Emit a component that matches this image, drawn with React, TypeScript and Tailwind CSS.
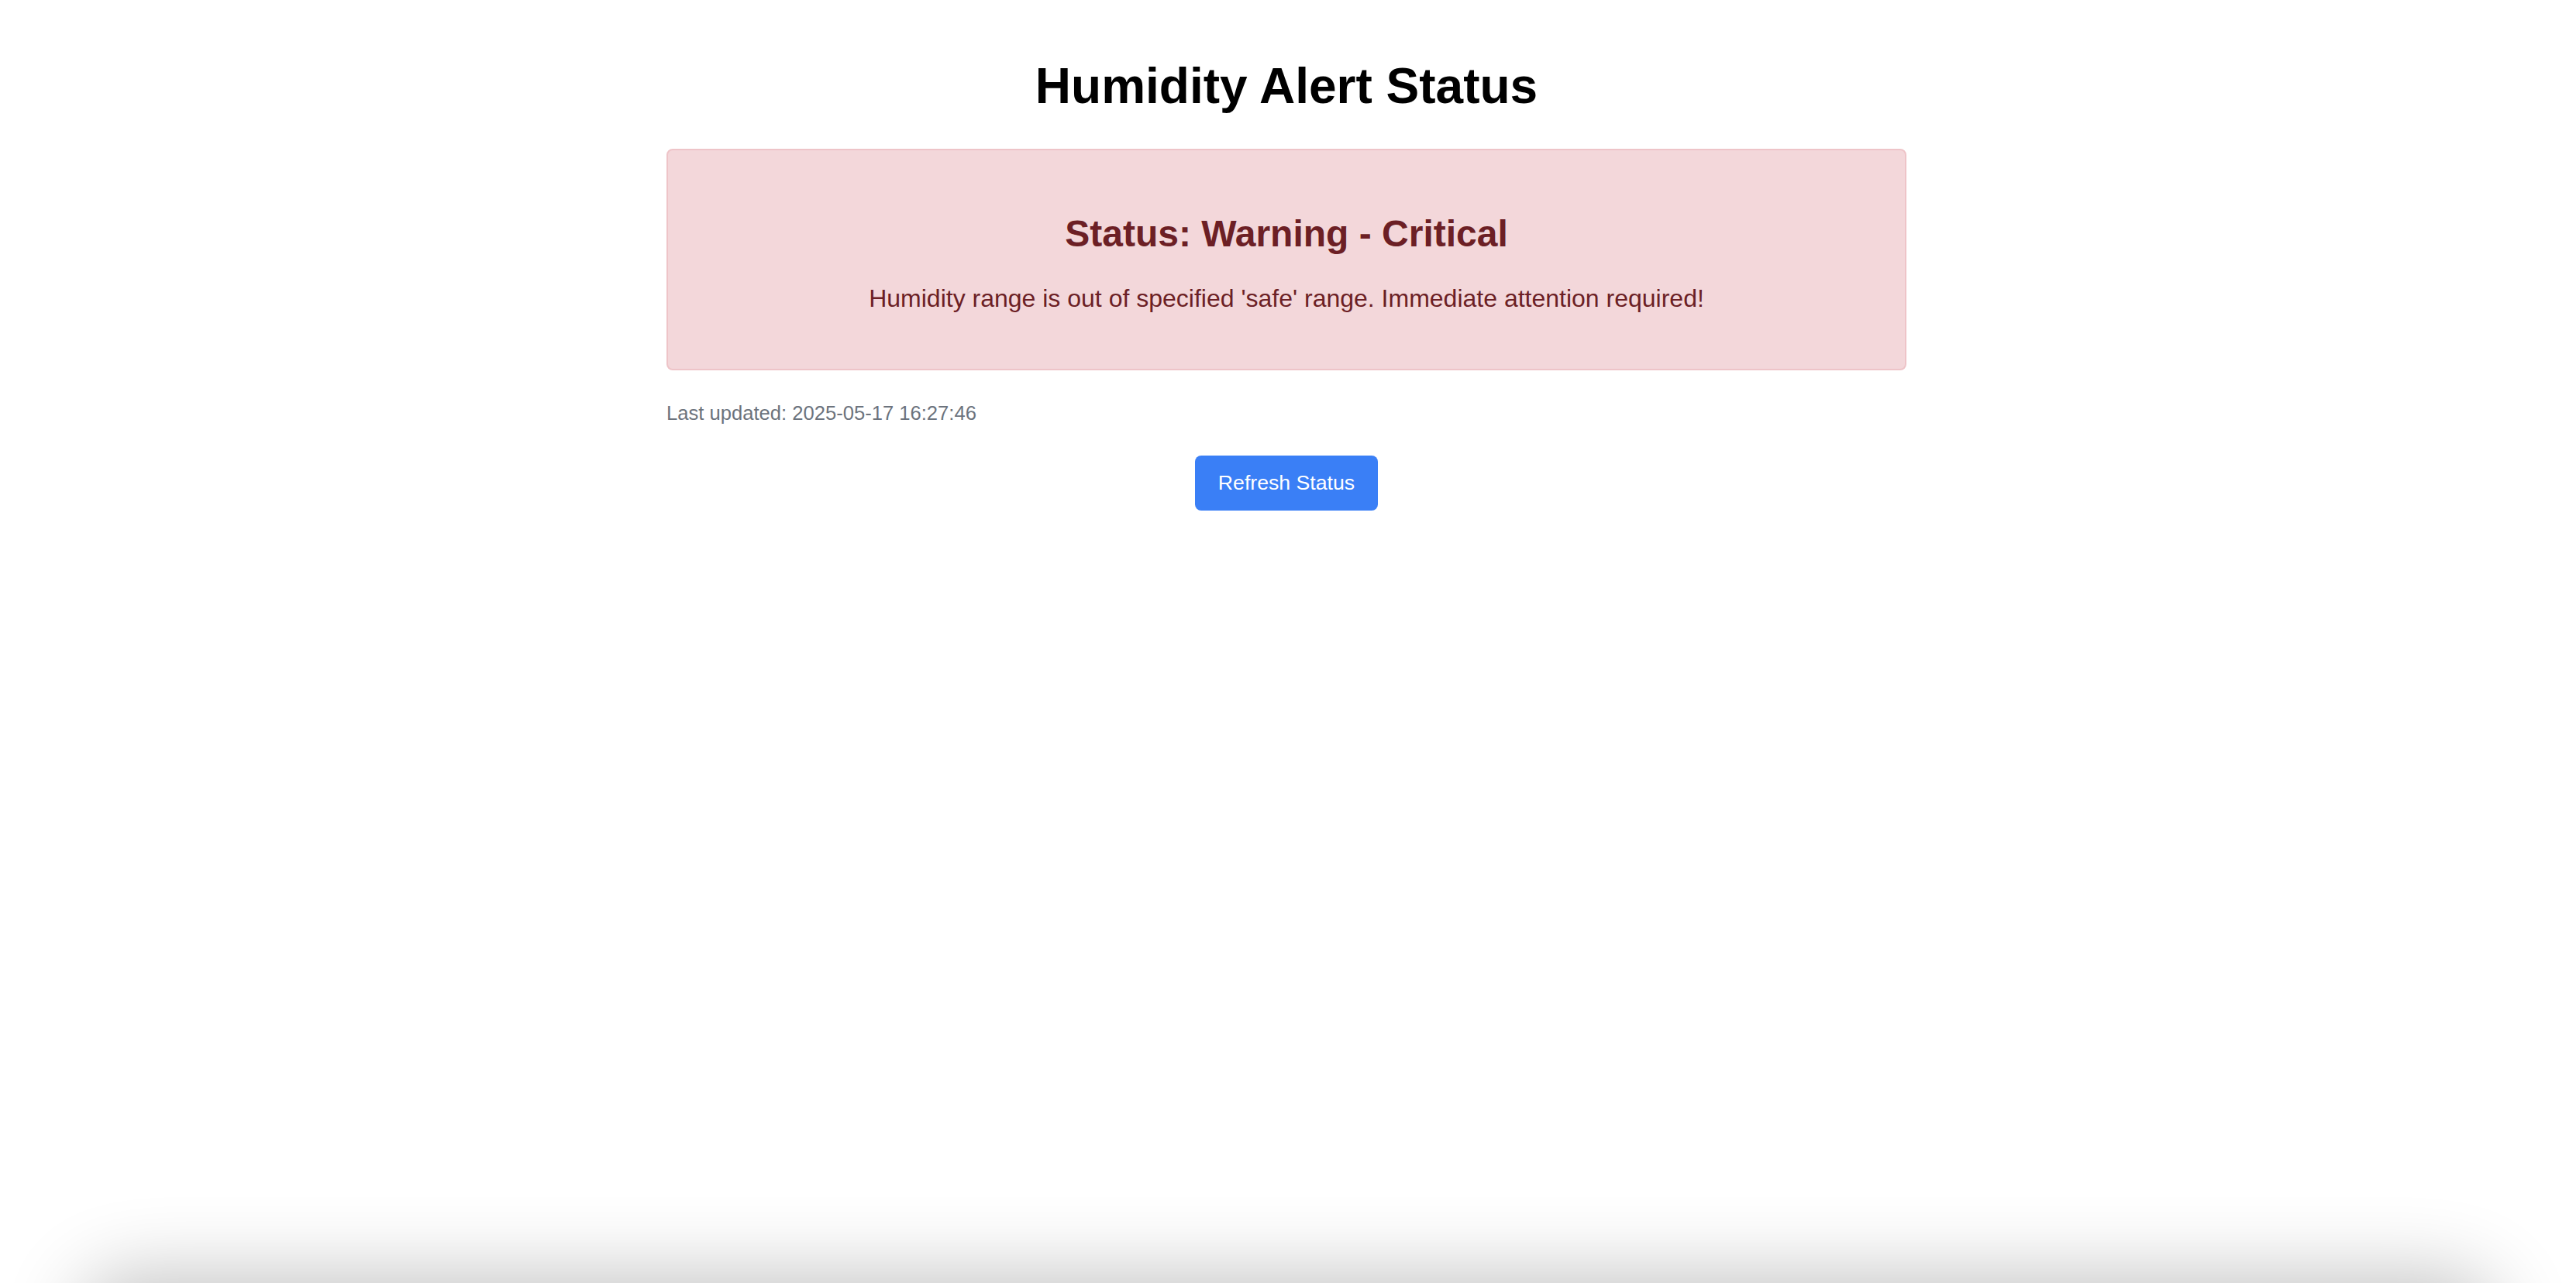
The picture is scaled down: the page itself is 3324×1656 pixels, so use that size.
import React from "react";

const status = {
    title: "Status: Warning - Critical",
    message: "Humidity range is out of specified 'safe' range. Immediate attention required!",
    updated: "2025-05-17 16:27:46",
};

export default function App() {
    return (
        <div className="min-h-screen bg-white font-['Liberation_Sans',Arial,sans-serif] text-black">
            <div className="flex justify-center pr-[4px]">
                <div className="w-[1600px] pt-[74px]">
                    <h1 className="text-center text-[64px] font-bold leading-[74px]">
                        Humidity Alert Status
                    </h1>

                    <div className="mt-[44px] rounded-[8px] border-2 border-[#eec4c8] bg-[#f3d7da] px-[40px] py-[40px] text-center text-[#6c1f25]">
                        <h2 className="mt-[40px] text-[48px] font-bold leading-[55px]">
                            {status.title}
                        </h2>
                        <p className="mt-[38px] mb-[32px] text-[32px] leading-[37px]">
                            {status.message}
                        </p>
                    </div>

                    <p className="mt-[41px] text-[25.6px] leading-[29.4px] text-[#6c737d]">
                        Last updated: {status.updated}
                    </p>

                    <div className="mt-[40px] flex justify-center">
                        <button className="rounded-[8px] bg-[#3a7ff6] px-[30px] py-[20px] text-[26.67px] leading-[30.67px] text-white">
                            Refresh Status
                        </button>
                    </div>
                </div>
            </div>

            {/* window shadow along the bottom edge */}
            <div className="pointer-events-none fixed left-[120px] right-[120px] top-[1665px] h-[100px] rounded-[60px] shadow-[0_0_100px_20px_rgba(0,0,0,0.24)]" />
        </div>
    );
}
